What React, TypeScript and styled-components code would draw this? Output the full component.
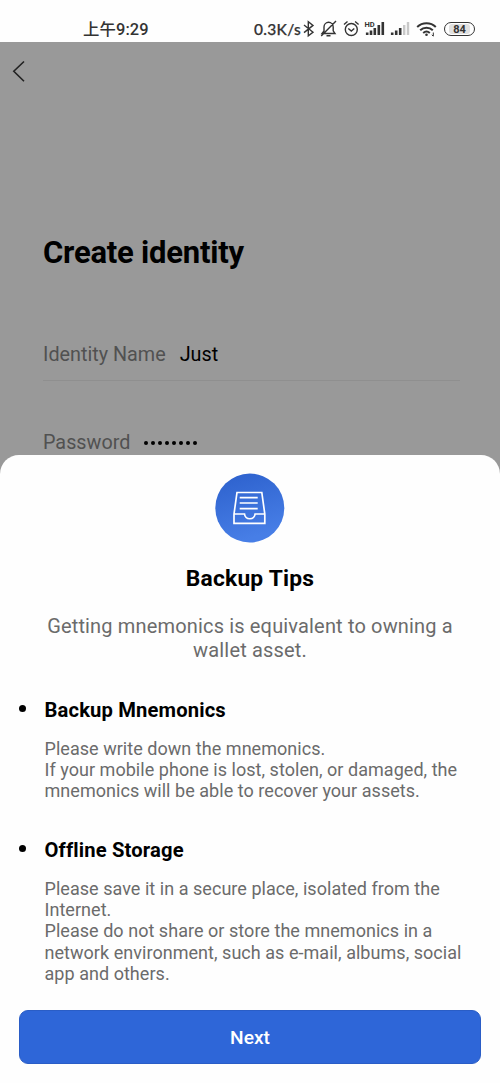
import React from 'react';
import styled, { createGlobalStyle } from 'styled-components';

const GlobalStyle = createGlobalStyle`
  * { box-sizing: border-box; }
  body { margin: 0; background: #fff; }
  h1, h2, h3, p, ul { margin: 0; padding: 0; }
`;

const Screen = styled.div`
  position: relative;
  display: flex;
  flex-direction: column;
  width: 500px;
  height: 1083px;
  overflow: hidden;
  background: #fefefe;
  font-family: Roboto, 'Noto Sans CJK SC', sans-serif;
  color: #000;
`;

const StatusBar = styled.header`
  flex: none;
  display: flex;
  align-items: center;
  justify-content: space-between;
  height: 42px;
  padding: 16px 25px 0 83px;
  font-family: Lato, 'Noto Sans CJK SC', sans-serif;
  color: #333;
`;

const Clock = styled.span`
  padding-top: 1px;
  font: 500 16.4px/26px Roboto, 'Noto Sans CJK SC', sans-serif;
  letter-spacing: 0.1px;
  white-space: nowrap;
`;

const StatusIcons = styled.div`
  display: flex;
  align-items: center;
  height: 26px;
`;

const Speed = styled.span`
  width: 49px;
  font-size: 15.5px;
  font-weight: 500;
  letter-spacing: 0.3px;
  line-height: 26px;
  white-space: nowrap;
  -webkit-text-stroke: 0.25px #333;
`;

const Glyphs = styled.svg`
  display: block;
  overflow: visible;
`;

const Battery = styled.span`
  display: flex;
  width: 31px;
  height: 14px;
  margin-left: 7px;
  padding: 1px 4px;
  border: 1.5px solid #333;
  border-radius: 7px;
  background: #fff;
`;

const BatteryLevel = styled.span`
  flex: 1;
  border-radius: 3px;
  background: #e0e0e0;
  font: 700 11px/11px Roboto, sans-serif;
  text-align: center;
`;

const Page = styled.main`
  flex: 1;
  padding: 19px 40px 0 43px;
  background: #999;
`;

const BackButton = styled.button`
  display: block;
  width: 14px;
  height: 22px;
  margin-left: -32px;
  padding: 0;
  border: 0;
  background: none;
`;

const Title = styled.h1`
  margin-top: 150px;
  font-size: 31px;
  font-weight: 700;
  line-height: 40px;
  letter-spacing: -0.22px;
  white-space: nowrap;
`;

const Field = styled.div<{ $top: number }>`
  display: flex;
  align-items: center;
  gap: 14px;
  height: 38px;
  margin-top: ${({ $top }) => $top}px;
  padding-bottom: 13px;
  border-bottom: 1px solid #8f8f8f;
  font-size: 19.8px;
  line-height: 24px;
`;

const FieldLabel = styled.span`
  color: #515151;
`;

const PasswordDots = styled.span`
  display: flex;
  gap: 3px;
`;

const Dot = styled.i`
  width: 4px;
  height: 4px;
  border-radius: 50%;
  background: #000;
`;

const Sheet = styled.section`
  position: absolute;
  right: 0;
  bottom: 0;
  left: 0;
  display: flex;
  flex-direction: column;
  height: 628.5px;
  padding: 18.5px 19px 19px;
  border-radius: 19px 19px 0 0;
  background: #fefefe;
`;

const Emblem = styled.div`
  align-self: center;
  width: 70px;
  height: 70px;
`;

const SheetTitle = styled.h2`
  margin-top: 22px;
  font-size: 22.8px;
  font-weight: 700;
  line-height: 28px;
  letter-spacing: 0.22px;
  text-align: center;
`;

const Lead = styled.p`
  margin-top: 21px;
  font-size: 20px;
  line-height: 24.3px;
  letter-spacing: 0.16px;
  text-align: center;
  color: #6b6b6b;
`;

const Tip = styled.section<{ $top: number }>`
  display: grid;
  grid-template-columns: 25.5px 1fr;
  margin-top: ${({ $top }) => $top}px;
`;

const Bullet = styled.i`
  width: 7px;
  height: 7px;
  margin-top: 7px;
  border-radius: 50%;
  background: #000;
`;

const TipTitle = styled.h3`
  font-size: 20.2px;
  font-weight: 700;
  line-height: 24px;
  letter-spacing: 0.15px;
`;

const TipText = styled.p`
  grid-column: 2;
  margin-top: 16.2px;
  font-size: 18px;
  line-height: 21.3px;
  letter-spacing: 0.04px;
  color: #6b6b6b;
  white-space: nowrap;
`;

const NextButton = styled.button`
  flex: none;
  height: 54px;
  margin-top: auto;
  padding: 0;
  border: 1px solid #2a5dc6;
  border-radius: 9px;
  background: #2e66d8;
  color: #fff;
  font: 500 19.2px/54px Roboto, sans-serif;
`;

const StatusGlyphs = () => (
  <Glyphs width="134" height="20" viewBox="303 19 134 20" fill="none" stroke="#333" strokeWidth="1.4">
    <path d="M304 25l9 7.2-4.700 3.700V21.700l4.700 3.700-9 7.200" />
    <path d="M323.5 33.5h11.5l-1.8-2.6v-4a4.6 4.6 0 0 0-9.2 0v4l-2 2.6zM326.5 35.8h4M336 21l-14.8 15" />
    <circle cx="351.300" cy="29.500" r="6" />
    <path d="M348.300 28.500l3 2.500 3-2.500M344 24.500l3.500-3M358.600 24.500l-3.500-3" />
    <text x="364.500" y="26.500" fill="#333" stroke="none" fontFamily="Roboto, sans-serif" fontWeight="700" fontSize="7.500">HD</text>
    <path strokeWidth="2.600" d="M367.200 35v-2.500M371 35v-4.500M374.800 35v-7M378.800 35v-10M382.800 35V22" />
    <path strokeWidth="2.600" d="M392.200 35v-2.500M396.200 35v-4.500M400.200 35v-7" />
    <path strokeWidth="2.400" stroke="#c8c8c8" d="M404.200 35v-10M408 35V22" />
    <path strokeWidth="2" d="M417.200 27a13.500 13.500 0 0 1 18.600 0M420.200 30.200a9 9 0 0 1 12.600 0M423.200 33a5 5 0 0 1 6.600 0" />
    <circle cx="426.500" cy="34.800" r="1.300" fill="#333" stroke="none" />
    <path strokeWidth="1" d="M433.300 32.500v3.500M431.800 34.800l1.500 1.500" />
  </Glyphs>
);

const TrayEmblem = () => (
  <Glyphs width="70" height="70" viewBox="215 473 70 70" fill="none" stroke="#fff" strokeWidth="1.700">
    <defs>
      <linearGradient id="tray" x1="0" y1="0" x2="0.300" y2="1">
        <stop offset="0" stopColor="#2c60cc" />
        <stop offset="1" stopColor="#477ee6" />
      </linearGradient>
    </defs>
    <circle cx="249.800" cy="508" r="34.500" fill="url(#tray)" stroke="none" />
    <path d="M237 492.500h24.800l3 21.500v9.300H234V514zM234 514h10.500c.8 6.300 9.800 6.300 10.600 0h9.700M239.700 497.600h18M239.700 503h18M239.700 508.600h18" />
  </Glyphs>
);

export default function App() {
  return (
    <>
      <GlobalStyle />
      <Screen>
        <StatusBar>
          <Clock>上午9:29</Clock>
          <StatusIcons>
            <Speed>0.3K/s</Speed>
            <StatusGlyphs />
            <Battery><BatteryLevel>84</BatteryLevel></Battery>
          </StatusIcons>
        </StatusBar>
        <Page>
          <BackButton aria-label="Back">
            <Glyphs width="14" height="22" fill="none" stroke="#222" strokeWidth="1.600">
              <path d="M13 0.500L2.800 10.200l10.200 10" />
            </Glyphs>
          </BackButton>
          <Title>Create identity</Title>
          <Field $top={70}>
            <FieldLabel>Identity Name</FieldLabel>
            <span>Just</span>
          </Field>
          <Field $top={50}>
            <FieldLabel>Password</FieldLabel>
            <PasswordDots>
              {Array.from({ length: 8 }, (_, i) => <Dot key={i} />)}
            </PasswordDots>
          </Field>
        </Page>
        <Sheet>
          <Emblem><TrayEmblem /></Emblem>
          <SheetTitle>Backup Tips</SheetTitle>
          <Lead>Getting mnemonics is equivalent to owning a<br />wallet asset.</Lead>
          <Tip $top={35}>
            <Bullet />
            <TipTitle>Backup Mnemonics</TipTitle>
            <TipText>
              Please write down the mnemonics.<br />
              If your mobile phone is lost, stolen, or damaged, the<br />
              mnemonics will be able to recover your assets.
            </TipText>
          </Tip>
          <Tip $top={36}>
            <Bullet />
            <TipTitle>Offline Storage</TipTitle>
            <TipText>
              Please save it in a secure place, isolated from the<br />
              Internet.<br />
              Please do not share or store the mnemonics in a<br />
              network environment, such as e-mail, albums, social<br />
              app and others.
            </TipText>
          </Tip>
          <NextButton>Next</NextButton>
        </Sheet>
      </Screen>
    </>
  );
}
